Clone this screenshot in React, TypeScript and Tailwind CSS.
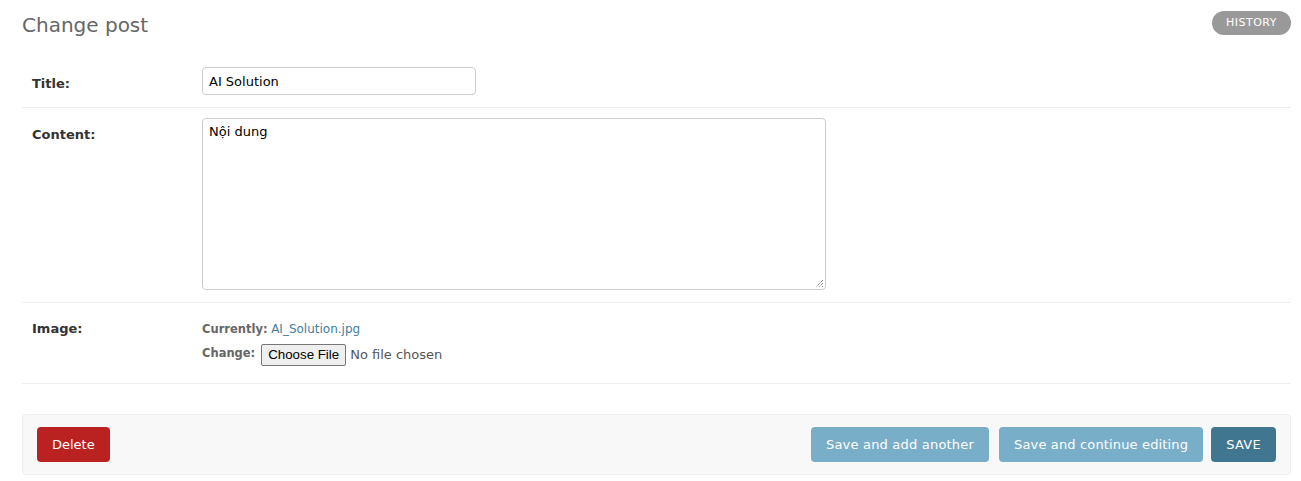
import React from "react";

export default function App() {
  const font = { fontFamily: '"DejaVu Sans", Verdana, sans-serif' };
  return (
    <div className="w-[1301px] min-h-[481px] bg-white pl-[22px] pr-[10px] text-[#333]" style={font}>
      <div className="flex items-start justify-between pt-[11px]">
        <h1 className="mt-[2px] text-[20px] leading-[24px] font-normal text-[#666]">Change post</h1>
        <a className="rounded-full bg-[#999] px-[14px] py-[5px] text-[11px] leading-[14px] uppercase tracking-[0.5px] text-white">
          History
        </a>
      </div>

      <div className="mt-[20px]">
        <div className="flex border-b border-[#eee] px-[10px] pt-[10px] pb-[12px]">
          <label className="w-[170px] shrink-0 pt-[9px] text-[13px] font-bold leading-[16px] text-[#333]">Title:</label>
          <div className="flex h-[28px] w-[274px] items-center rounded-[4px] border border-[#ccc] px-[6px] pt-[1px] text-[13px] text-black">
            AI Solution
          </div>
        </div>

        <div className="flex border-b border-[#eee] px-[10px] pt-[10px] pb-[12px]">
          <label className="w-[170px] shrink-0 pt-[9px] text-[13px] font-bold leading-[16px] text-[#333]">Content:</label>
          <div className="relative h-[172px] w-[624px] rounded-[4px] border border-[#ccc] px-[6px] pt-[5px] text-[13px] leading-[16px] text-black">
            Nội dung
            <svg className="absolute right-[1px] bottom-[1px]" width="9" height="9" viewBox="0 0 9 9">
              <path d="M8 1 L1 8 M8 4 L4 8 M8 7 L7 8" stroke="#555" strokeWidth="1" strokeDasharray="1 1" />
            </svg>
          </div>
        </div>

        <div className="flex border-b border-[#eee] px-[10px] pt-[18px] pb-[17px]">
          <label className="w-[170px] shrink-0 text-[13px] font-bold leading-[16px] text-[#333]">Image:</label>
          <div className="flex flex-col">
            <p className="text-[11.5px] leading-[16px] text-[#666]">
              <span className="font-bold">Currently:</span>{" "}
              <a className="text-[12px] text-[#447e9b]">AI_Solution.jpg</a>
            </p>
            <div className="mt-[7px] flex items-center text-[11.5px] text-[#666]">
              <span className="mr-[6px] -mt-[3px] font-bold">Change:</span>
              <span
                className="flex h-[22px] items-center rounded-[2px] border border-[#767676] bg-[#efefef] px-[6px] text-[13.3px] text-black"
                style={{ fontFamily: '"Liberation Sans", Arial, sans-serif' }}
              >
                Choose File
              </span>
              <span className="ml-[4px] text-[13px] text-[#555]">No file chosen</span>
            </div>
          </div>
        </div>
      </div>

      <div className="mt-[30px] flex items-center justify-between rounded-[4px] border border-[#eee] bg-[#f8f8f8] px-[14px] py-[12px]">
        <a className="flex h-[35px] items-center rounded-[4px] bg-[#ba2121] px-[15px] text-[13px] text-white">Delete</a>
        <div className="flex items-center">
          <a className="flex h-[35px] items-center rounded-[4px] bg-[#79aec8] px-[15px] text-[13px] tracking-[0.2px] text-white">
            Save and add another
          </a>
          <a className="ml-[10px] flex h-[35px] items-center rounded-[4px] bg-[#79aec8] px-[15px] text-[13px] tracking-[0.15px] text-white">
            Save and continue editing
          </a>
          <a className="ml-[8px] flex h-[35px] items-center rounded-[4px] bg-[#417690] px-[15px] text-[13px] uppercase tracking-[0.3px] text-white">
            Save
          </a>
        </div>
      </div>
    </div>
  );
}
